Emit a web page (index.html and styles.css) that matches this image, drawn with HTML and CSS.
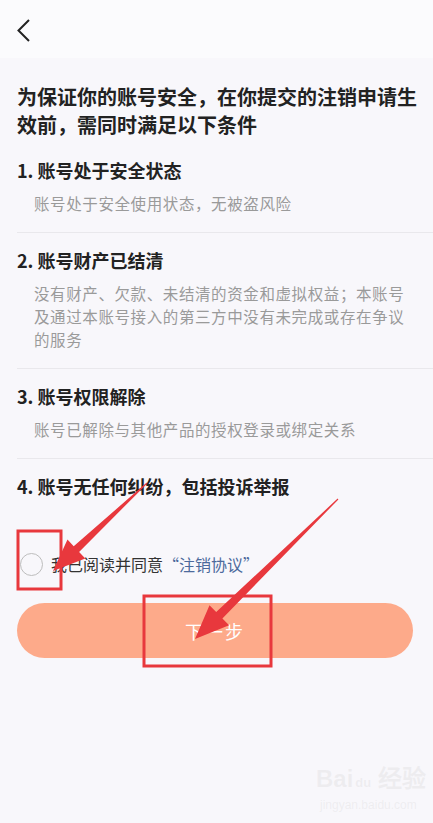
FILE: index.html
```html
<!DOCTYPE html>
<html lang="zh-CN">
<head>
    <meta charset="UTF-8">
    <meta name="viewport" content="width=device-width, initial-scale=1.0">
    <title>注销账号</title>
    <link rel="stylesheet" href="styles.css">
</head>
<body>
    <div class="topbar">
        <svg class="back" width="16" height="26" viewBox="0 0 16 26">
            <path d="M13 2 L2.5 12.5 L13 23" fill="none" stroke="#222" stroke-width="2"/>
        </svg>
    </div>

    <div class="content">
        <h1>为保证你的账号安全，在你提交的注销申请生效前，需同时满足以下条件</h1>

        <div class="item">
            <h2>1. 账号处于安全状态</h2>
            <p>账号处于安全使用状态，无被盗风险</p>
        </div>
        <div class="item">
            <h2>2. 账号财产已结清</h2>
            <p>没有财产、欠款、未结清的资金和虚拟权益；本账号及通过本账号接入的第三方中没有未完成或存在争议的服务</p>
        </div>
        <div class="item">
            <h2>3. 账号权限解除</h2>
            <p>账号已解除与其他产品的授权登录或绑定关系</p>
        </div>
        <div class="item last">
            <h2>4. 账号无任何纠纷，包括投诉举报</h2>
        </div>
    </div>

    <div class="agree">
        <span class="radio"></span>
        <span>我已阅读并同意<a class="link">“注销协议”</a></span>
    </div>

    <button class="next">下一步</button>

    <!-- annotation marks drawn over the screenshot -->
    <svg class="marks" width="433" height="823" viewBox="0 0 433 823">
        <rect x="18" y="531" width="43" height="58" fill="none" stroke="#e8383d" stroke-width="3"/>
        <rect x="144" y="596" width="127" height="70" fill="none" stroke="#e8383d" stroke-width="3"/>
        <polygon fill="#e8383d" points="147.3,483.4 79.1,552.0 85.3,558.6 53,571 67.5,539.6 73.7,546.2 146.7,482.6"/>
        <polygon fill="#e8383d" points="338.4,499.4 222.4,618.4 229.1,625.2 195,639 209.5,605.2 216.2,612.0 337.6,498.6"/>
    </svg>

    <div class="watermark">
        <div class="wm-logo">Bai<span class="paw">du</span> 经验</div>
        <div class="wm-url">jingyan.baidu.com</div>
    </div>
</body>
</html>
```

FILE: styles.css
```css
body {
    margin: 0;
    padding: 0;
    background-color: #f8f7fb;
    font-family: "Noto Sans CJK SC", "Noto Sans", sans-serif;
    color: #222;
    position: relative;
    width: 433px;
    height: 823px;
    overflow: hidden;
}

.topbar {
    height: 58px;
    background-color: #fbfbfd;
    display: flex;
    align-items: center;
    padding-left: 16px;
}

.back {
    margin-top: 4px;
}

.content {
    padding-left: 17px;
}

h1 {
    margin: 25px 0 0 0;
    padding-right: 16px;
    font-size: 20px;
    line-height: 28px;
    font-weight: 700;
    color: #222;
}

.item {
    padding: 14px 0 17px 0;
    border-bottom: 1px solid #e9e8ec;
}

.item:first-of-type {
    padding-top: 18px;
}

.item.last {
    border-bottom: none;
    padding-bottom: 0;
}

h2 {
    margin: 0;
    font-size: 18px;
    line-height: 26px;
    font-weight: 700;
    color: #222;
}

p {
    margin: 9px 0 0 0;
    padding: 0 18px 0 17px;
    font-size: 15.5px;
    line-height: 23px;
    letter-spacing: 0.6px;
    color: #9a9a9a;
}

.agree {
    display: flex;
    align-items: center;
    margin: 53px 0 0 20px;
    height: 24px;
    font-size: 16px;
    color: #333;
}

.radio {
    width: 21px;
    height: 21px;
    border: 1.5px solid #bdbdbd;
    border-radius: 50%;
    margin-right: 8px;
}

.link {
    color: #4c6a9c;
}

.next {
    display: block;
    width: 396px;
    height: 55px;
    margin: 27px 0 0 17px;
    border: none;
    border-radius: 28px;
    background-color: #fdaa8a;
    color: #fff;
    font-family: "Noto Sans CJK SC", sans-serif;
    font-size: 18px;
    letter-spacing: 2px;
}

.marks {
    position: absolute;
    top: 0;
    left: 0;
    pointer-events: none;
}

.watermark {
    position: absolute;
    left: 316px;
    top: 764px;
    color: rgba(200, 200, 200, 0.22);
    font-family: "Liberation Sans", sans-serif;
}

.wm-logo {
    font-size: 24px;
    font-weight: 700;
    line-height: 30px;
}

.paw {
    font-size: 13px;
    margin-left: 2px;
}

.wm-url {
    font-size: 12px;
    margin-left: 4px;
}
```
